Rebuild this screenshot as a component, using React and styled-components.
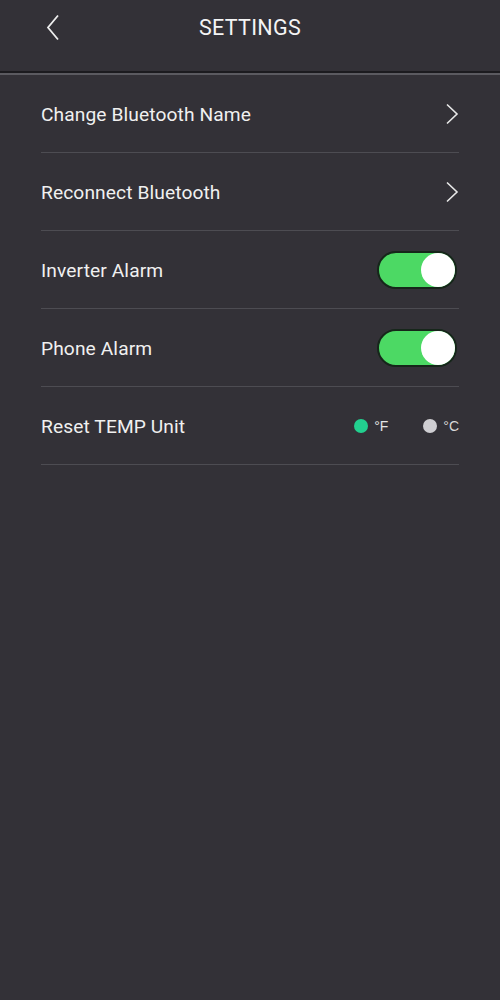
import React, { useState } from "react";
import styled, { createGlobalStyle } from "styled-components";

const Global = createGlobalStyle`
  html, body { margin: 0; padding: 0; background: #333137; }
  body { font-family: Roboto, "Noto Sans", sans-serif; -webkit-font-smoothing: antialiased; }
`;

const Page = styled.div`
  width: 500px;
  min-height: 1000px;
  background: #333137;
  color: #f2f2f2;
`;

const Header = styled.header`
  height: 71px;
  display: grid;
  grid-template-columns: 100px 1fr 100px;
  align-items: start;
  border-bottom: 2px solid #1c1b1f;
  box-shadow: 0 2px 0 #5b5a60;
`;

const BackButton = styled.button`
  background: none;
  border: none;
  padding: 0;
  margin: 14px 0 0 44px;
  width: 20px;
  height: 27px;
  display: flex;
  cursor: pointer;
`;

const Title = styled.h1`
  margin: 15px 0 0;
  text-align: center;
  font-size: 21.5px;
  font-weight: 400;
  letter-spacing: 0.3px;
  line-height: 26px;
  color: #f4f4f4;
`;

const List = styled.div`
  margin-top: 2px;
  padding: 0 41px;
  display: flex;
  flex-direction: column;
`;

const Row = styled.div`
  height: 77px;
  border-bottom: 1px solid #4d4c52;
  display: flex;
  align-items: center;
  justify-content: space-between;
`;

const Label = styled.span`
  font-size: 19.2px;
  letter-spacing: 0.1px;
  color: #f0f0f0;
  padding-top: 2px;
`;

const Chevron = styled.svg`
  width: 14px;
  height: 22px;
`;

const Toggle = styled.button`
  width: 80px;
  height: 38px;
  border-radius: 19px;
  border: 2px solid #16261a;
  background: ${(p) => (p.$on ? "#4cd964" : "#6b6a70")};
  padding: 0;
  margin-right: 2px;
  display: flex;
  align-items: center;
  justify-content: ${(p) => (p.$on ? "flex-end" : "flex-start")};
  cursor: pointer;
`;

const Knob = styled.span`
  width: 34px;
  height: 34px;
  border-radius: 50%;
  background: #ffffff;
`;

const Units = styled.div`
  display: flex;
  align-items: center;
  gap: 35px;
`;

const Unit = styled.label`
  display: flex;
  align-items: center;
  gap: 6px;
  font-family: "Liberation Sans", Arial, sans-serif;
  font-size: 14px;
  color: ${(p) => (p.$active ? "#e4e4e4" : "#d8d8d8")};
  cursor: pointer;
`;

const Dot = styled.span`
  width: 14px;
  height: 14px;
  border-radius: 50%;
  background: ${(p) => (p.$active ? "#22d08f" : "#cfced2")};
`;

const ChevronRight = () => (
  <Chevron viewBox="0 0 14 22">
    <path d="M2 1.5 L12 11 L2 20.5" fill="none" stroke="#e8e8e8" strokeWidth="1.6" />
  </Chevron>
);

export default function App() {
  const [inv, setInv] = useState(true);
  const [phone, setPhone] = useState(true);
  const [unit, setUnit] = useState("F");
  return (
    <Page>
      <Global />
      <Header>
        <BackButton aria-label="Back">
          <svg width="20" height="27" viewBox="0 0 20 27">
            <path d="M14 1.5 L4 13.5 L14 25.5" fill="none" stroke="#eeeeee" strokeWidth="1.8" />
          </svg>
        </BackButton>
        <Title>SETTINGS</Title>
        <div />
      </Header>
      <List>
        <Row>
          <Label>Change Bluetooth Name</Label>
          <ChevronRight />
        </Row>
        <Row>
          <Label>Reconnect Bluetooth</Label>
          <ChevronRight />
        </Row>
        <Row>
          <Label>Inverter Alarm</Label>
          <Toggle $on={inv} onClick={() => setInv(!inv)}>
            <Knob />
          </Toggle>
        </Row>
        <Row>
          <Label>Phone Alarm</Label>
          <Toggle $on={phone} onClick={() => setPhone(!phone)}>
            <Knob />
          </Toggle>
        </Row>
        <Row>
          <Label>Reset TEMP Unit</Label>
          <Units>
            <Unit $active={unit === "F"} onClick={() => setUnit("F")}>
              <Dot $active={unit === "F"} />
              °F
            </Unit>
            <Unit $active={unit === "C"} onClick={() => setUnit("C")}>
              <Dot $active={unit === "C"} />
              °C
            </Unit>
          </Units>
        </Row>
      </List>
    </Page>
  );
}
